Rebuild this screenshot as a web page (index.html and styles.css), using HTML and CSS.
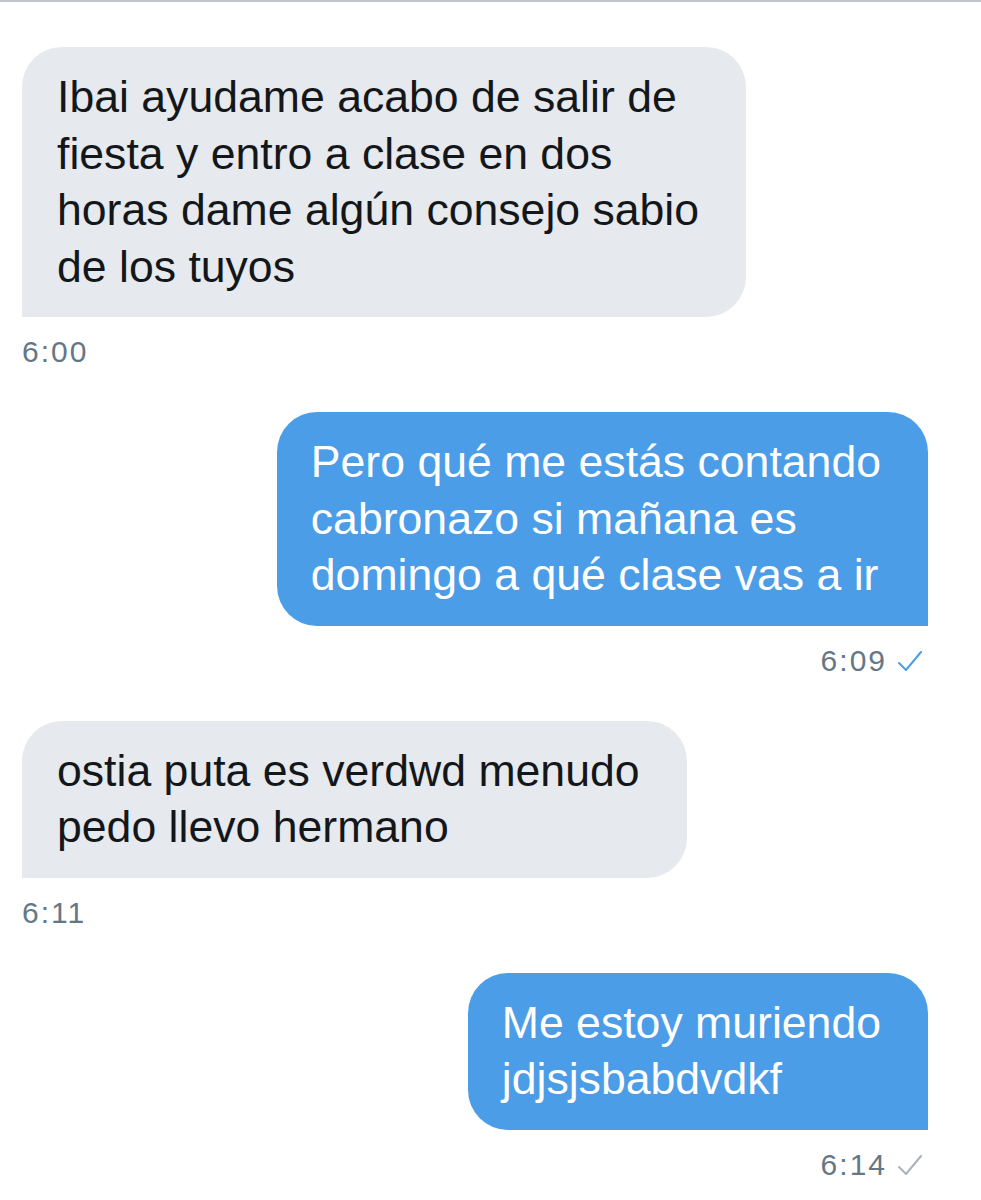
FILE: index.html
```html
<!DOCTYPE html>
<html lang="es">
<head>
<meta charset="utf-8">
<title>Mensajes</title>
<link rel="stylesheet" href="styles.css">
</head>
<body>
<main class="chat">
  <div class="msg in">
    <div class="bubble">Ibai ayudame acabo de salir de<br>fiesta y entro a clase en dos<br>horas dame algún consejo sabio<br>de los tuyos</div>
    <div class="meta"><span class="time">6:00</span></div>
  </div>
  <div class="msg out">
    <div class="bubble">Pero qué me estás contando<br>cabronazo si mañana es<br>domingo a qué clase vas a ir</div>
    <div class="meta"><span class="time">6:09</span><svg class="check read" viewBox="0 0 24 20" width="24" height="20"><polyline points="1,12 8,19 23,1" fill="none" stroke="currentColor" stroke-width="2" stroke-linecap="round" stroke-linejoin="round"/></svg></div>
  </div>
  <div class="msg in">
    <div class="bubble">ostia puta es verdwd menudo<br>pedo llevo hermano</div>
    <div class="meta"><span class="time">6:11</span></div>
  </div>
  <div class="msg out">
    <div class="bubble">Me estoy muriendo<br>jdjsjsbabdvdkf</div>
    <div class="meta"><span class="time">6:14</span><svg class="check sent" viewBox="0 0 24 20" width="24" height="20"><polyline points="1,12 8,19 23,1" fill="none" stroke="currentColor" stroke-width="2" stroke-linecap="round" stroke-linejoin="round"/></svg></div>
  </div>
</main>
</body>
</html>
```
FILE: styles.css
```css
html, body {
  margin: 0;
  padding: 0;
  background: #ffffff;
}

body {
  font-family: "Liberation Sans", Arial, sans-serif;
  border-top: 2px solid #c3c6ca;
}

.chat {
  display: flex;
  flex-direction: column;
  padding: 45px 53px 0 22px;
}

.msg {
  display: flex;
  flex-direction: column;
  margin-bottom: 43px;
}

.msg.in {
  align-items: flex-start;
}

.msg.out {
  align-items: flex-end;
}

.bubble {
  font-size: 44.6px;
  line-height: 56.5px;
  padding: 22px 47px 22px 35px;
  border-radius: 40px;
  white-space: nowrap;
}

.msg.in .bubble {
  background: #e6e9ed;
  color: #14171a;
  border-bottom-left-radius: 0;
}

.msg.out .bubble {
  background: #4c9de8;
  color: #ffffff;
  border-bottom-right-radius: 0;
  padding-left: 34px;
}

.meta {
  display: flex;
  align-items: center;
  gap: 11px;
  margin-top: 18px;
  height: 34px;
}

.msg.out .meta {
  padding-right: 6px;
}

.time {
  font-size: 30px;
  line-height: 34px;
  letter-spacing: 2px;
  color: #657786;
}

.check {
  display: block;
}

.check.read {
  color: #4c9de8;
}

.check.sent {
  color: #aab2ba;
}
```
